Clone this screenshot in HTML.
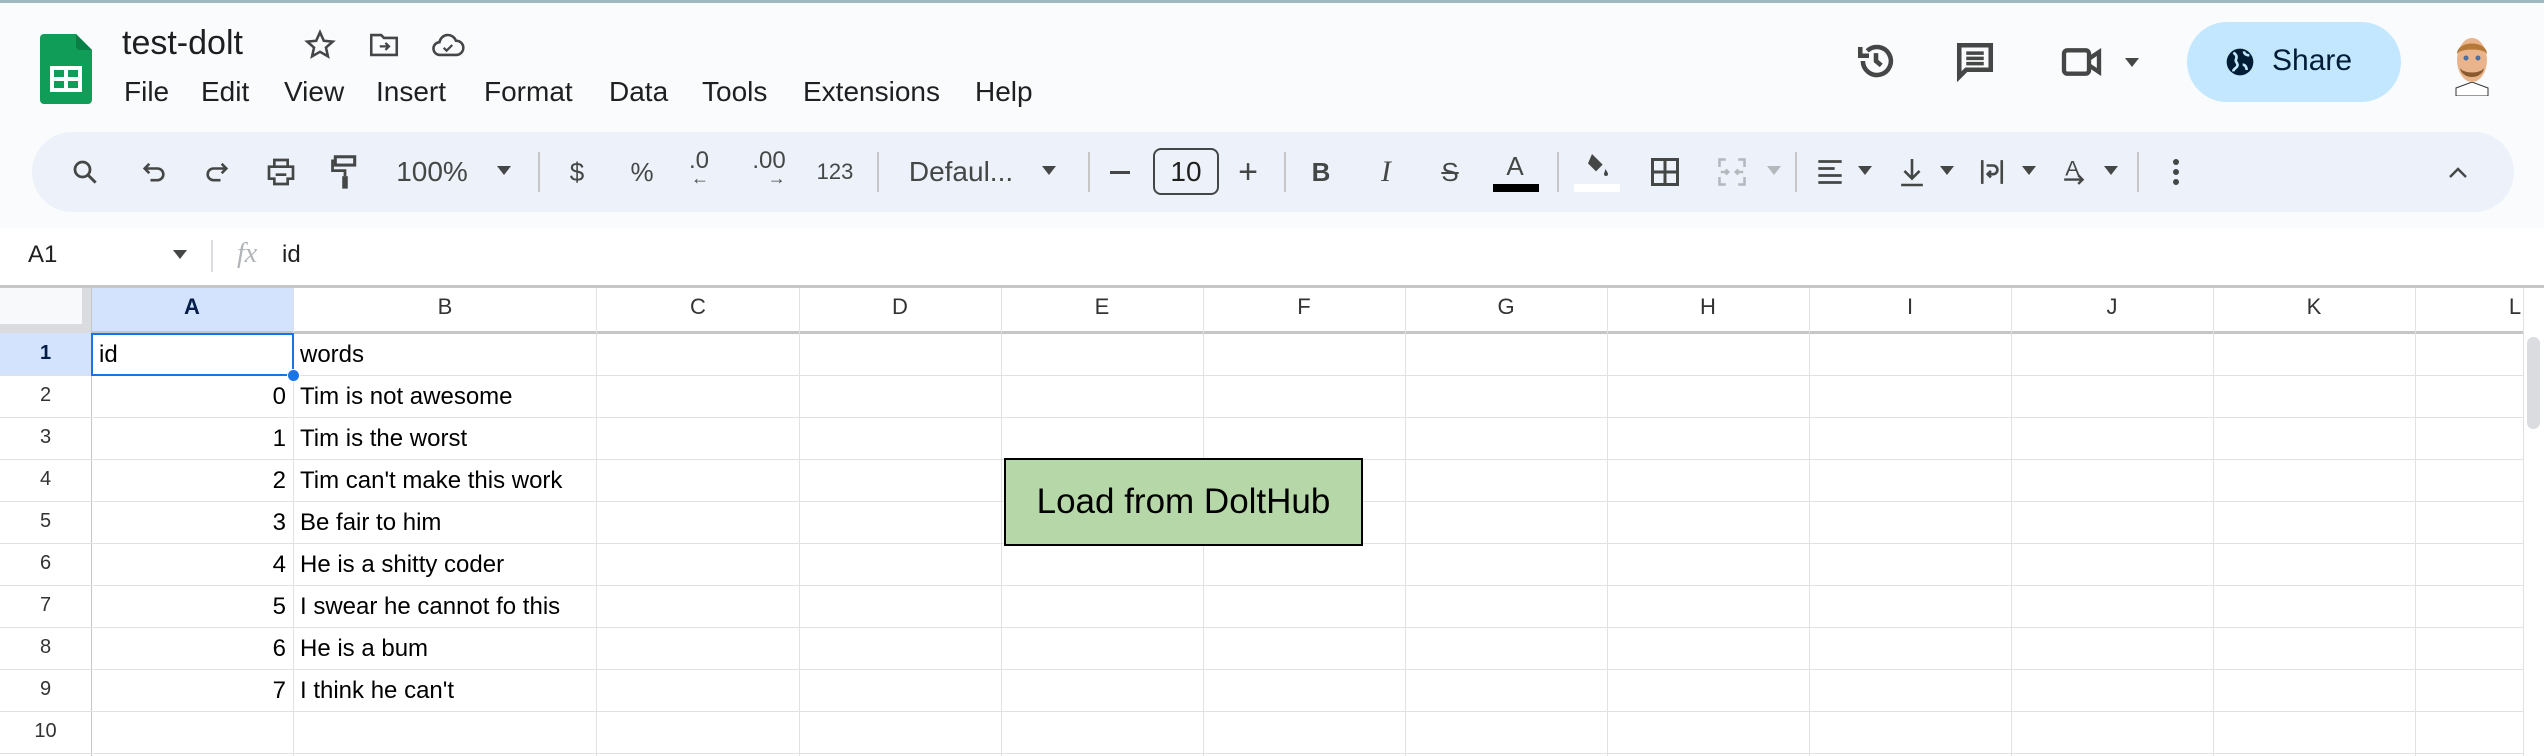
<!DOCTYPE html>
<html><head><meta charset="utf-8"><style>
*{margin:0;padding:0;box-sizing:border-box}
body{width:2544px;height:756px;overflow:hidden;background:#f9fbfd;font-family:"Liberation Sans",Arial,sans-serif;position:relative;color:#1f1f1f}
.a{position:absolute}
.menu span{position:absolute;top:76px;font-size:28px;color:#1f1f1f}
.tb{position:absolute;left:32px;top:132px;width:2482px;height:80px;background:#edf2fa;border-radius:40px}
.ic{position:absolute;top:172px;transform:translate(-50%,-50%);color:#444746;font-size:26px;line-height:1}
.sep{position:absolute;top:152px;width:2px;height:40px;background:#c7c7c7}
.dd{position:absolute;top:166px;width:0;height:0;border-left:7px solid transparent;border-right:7px solid transparent;border-top:9px solid #444746}
.grid{position:absolute;left:0;top:285px;width:2544px;height:471px;background:#fff}
.vl{position:absolute;width:1px;background:#e1e1e1}
.hl{position:absolute;height:1px;background:#e1e1e1}
.ch{position:absolute;top:294px;font-size:22px;color:#333;transform:translateX(-50%)}
.rh{position:absolute;left:0;width:91px;text-align:center;font-size:20px;color:#333}
.c{position:absolute;font-size:24px;color:#000}
</style></head><body>
<div class="a" style="left:0;top:0;width:2544px;height:3px;background:#9fb8be"></div>
<svg class="a" style="left:40px;top:34px" width="54" height="70" viewBox="0 0 54 70"><path d="M4 0h32l16 16v50a4 4 0 0 1-4 4H4a4 4 0 0 1-4-4V4a4 4 0 0 1 4-4z" fill="#0f9d58"/><path d="M36 0l16 16H40a4 4 0 0 1-4-4z" fill="#087f45"/><rect x="10" y="32" width="32" height="26" fill="#fff"/><rect x="14" y="36" width="10" height="7" fill="#0f9d58"/><rect x="28" y="36" width="10" height="7" fill="#0f9d58"/><rect x="14" y="47" width="10" height="7" fill="#0f9d58"/><rect x="28" y="47" width="10" height="7" fill="#0f9d58"/></svg>
<div class="a" style="left:122px;top:24px;font-size:34px;color:#1f1f1f">test-dolt</div>
<svg class="a" style="left:303px;top:28px" width="34" height="34" viewBox="0 0 24 24"><path d="M12 3l2.7 6 6.3.6-4.8 4.2 1.4 6.2L12 16.8 6.4 20l1.4-6.2L3 9.6 9.3 9z" fill="none" stroke="#444746" stroke-width="1.8"/></svg>
<svg class="a" style="left:367px;top:28px" width="34" height="34" viewBox="0 0 24 24"><path d="M3 5h7l2 2h9v12H3z" fill="none" stroke="#444746" stroke-width="1.8"/><path d="M9 13h6M13 10.5l2.5 2.5-2.5 2.5" fill="none" stroke="#444746" stroke-width="1.6"/></svg>
<svg class="a" style="left:430px;top:28px" width="36" height="34" viewBox="0 0 24 24"><path d="M6.5 19a4.5 4.5 0 0 1-.5-9A6 6 0 0 1 17.6 9 5 5 0 0 1 18 19z" fill="none" stroke="#444746" stroke-width="1.8"/><path d="M9 14l2 2 4-4" fill="none" stroke="#444746" stroke-width="1.6"/></svg>
<div class="menu"><span style="left:124px">File</span><span style="left:201px">Edit</span><span style="left:284px">View</span><span style="left:376px">Insert</span><span style="left:484px">Format</span><span style="left:609px">Data</span><span style="left:702px">Tools</span><span style="left:803px">Extensions</span><span style="left:975px">Help</span></div>
<svg class="a" style="left:1855px;top:40px" width="42" height="42" viewBox="0 0 24 24"><path d="M4.5 12A8 8 0 1 0 7 6.2" fill="none" stroke="#444746" stroke-width="2.6"/><path d="M3 4v5h5" fill="none" stroke="#444746" stroke-width="2.6"/><path d="M12 7.5V12l3 2.5" fill="none" stroke="#444746" stroke-width="2.6"/></svg>
<svg class="a" style="left:1954px;top:40px" width="42" height="42" viewBox="0 0 24 24"><path d="M3 3h18v14H7l-4 4z" fill="none" stroke="#444746" stroke-width="2.6"/><path d="M7 7.5h10M7 10.5h10M7 13.5h10" stroke="#444746" stroke-width="2"/></svg>
<svg class="a" style="left:2060px;top:42px" width="48" height="40" viewBox="0 0 28 24"><rect x="2" y="5" width="15" height="14" rx="2" fill="none" stroke="#444746" stroke-width="2.6"/><path d="M17 10l6-4v12l-6-4" fill="none" stroke="#444746" stroke-width="2.6"/></svg>
<div class="dd" style="left:2125px;top:58px"></div>
<div class="a" style="left:2187px;top:22px;width:214px;height:80px;border-radius:40px;background:#c2e7ff"></div>
<svg class="a" style="left:2224px;top:46px" width="32" height="32" viewBox="0 0 24 24"><circle cx="12" cy="12" r="10" fill="#001d35"/><path d="M7 5c2 1 3 3 2 5s2 3 1 5-3 2-3 4M15 4c0 2 2 3 4 3M14 14c2 0 3 2 3 4" fill="none" stroke="#c2e7ff" stroke-width="2"/></svg>
<div class="a" style="left:2272px;top:44px;font-size:30px;color:#001d35">Share</div>
<svg class="a" style="left:2448px;top:30px" width="48" height="66" viewBox="0 0 48 66"><path d="M8 58l16-6 16 6v8H8z" fill="#fff" stroke="#333" stroke-width="1"/><ellipse cx="24" cy="30" rx="15" ry="22" fill="#e9b48c"/><path d="M9 24c0-14 30-14 30 0c-3-6-27-6-30 0z" fill="#b57a3a"/><path d="M12 38c2 12 22 12 24 0c-4 6-20 6-24 0z" fill="#8a5a2f"/><circle cx="18" cy="28" r="2.5" fill="#4a6fa0"/><circle cx="30" cy="28" r="2.5" fill="#4a6fa0"/></svg>
<div class="tb"></div>
<svg class="ic" style="left:85px" width="30" height="32" viewBox="0 0 24 24"><circle cx="10" cy="10" r="6" fill="none" stroke="#444746" stroke-width="2.2"/><path d="M14.5 14.5l6 6" stroke="#444746" stroke-width="2.4"/></svg>
<svg class="ic" style="left:154px" width="28" height="28" viewBox="0 0 24 24"><path d="M5 9h10a5 5 0 0 1 0 10H9" fill="none" stroke="#444746" stroke-width="2.2"/><path d="M8 5L4 9l4 4" fill="none" stroke="#444746" stroke-width="2.2"/></svg>
<svg class="ic" style="left:217px" width="28" height="28" viewBox="0 0 24 24"><path d="M19 9H9a5 5 0 0 0 0 10h6" fill="none" stroke="#444746" stroke-width="2.2"/><path d="M16 5l4 4-4 4" fill="none" stroke="#444746" stroke-width="2.2"/></svg>
<svg class="ic" style="left:281px" width="32" height="32" viewBox="0 0 24 24"><path d="M7 3h10v5H7zM3 8h18v9h-4v4H7v-4H3z" fill="none" stroke="#444746" stroke-width="2"/><path d="M8 14h8" stroke="#444746" stroke-width="2"/></svg>
<svg class="ic" style="left:345px" width="28" height="36" viewBox="0 0 20 26"><rect x="3" y="2" width="14" height="6" fill="none" stroke="#444746" stroke-width="2.2"/><path d="M3 5H1v7h9v4" fill="none" stroke="#444746" stroke-width="2"/><rect x="8" y="16" width="4" height="9" fill="#444746"/></svg>
<div class="ic" style="left:432px;font-size:28px">100%</div>
<div class="dd" style="left:497px"></div>
<div class="sep" style="left:538px"></div>
<div class="ic" style="left:577px">$</div>
<div class="ic" style="left:642px">%</div>
<div class="ic" style="left:699px;font-size:24px;top:168px">.0<div style="font-size:18px;margin-top:-4px;text-align:right">←</div></div>
<div class="ic" style="left:769px;font-size:24px;top:168px">.00<div style="font-size:18px;margin-top:-4px;text-align:right">→</div></div>
<div class="ic" style="left:835px;font-size:22px">123</div>
<div class="sep" style="left:877px"></div>
<div class="ic" style="left:961px;font-size:28px">Defaul...</div>
<div class="dd" style="left:1042px"></div>
<div class="sep" style="left:1088px"></div>
<div class="a" style="left:1110px;top:171px;width:20px;height:2.5px;background:#444746"></div>
<div class="a" style="left:1153px;top:148px;width:66px;height:47px;border:2px solid #444746;border-radius:8px;font-size:28px;text-align:center;line-height:43px;color:#1f1f1f">10</div>
<div class="ic" style="left:1248px;font-size:34px">+</div>
<div class="sep" style="left:1284px"></div>
<div class="ic" style="left:1321px;font-weight:bold">B</div>
<div class="ic" style="left:1386px;font-style:italic;font-family:'Liberation Serif',serif;font-size:30px">I</div>
<div class="ic" style="left:1450px;text-decoration:line-through">S</div>
<div class="ic" style="left:1515px;top:166px;font-size:26px">A</div>
<div class="a" style="left:1493px;top:184px;width:46px;height:8px;background:#000"></div>
<div class="sep" style="left:1557px"></div>
<svg class="ic" style="left:1596px;top:166px" width="32" height="32" viewBox="0 0 24 24"><path d="M9 3l8 8-5 5-6-6z" fill="#444746"/><path d="M19 14c1 2 2 3 2 4a1.5 1.5 0 0 1-3 0c0-1 1-2 1-4z" fill="#444746"/></svg>
<div class="a" style="left:1574px;top:184px;width:46px;height:8px;background:#fff"></div>
<svg class="ic" style="left:1665px" width="30" height="30" viewBox="0 0 24 24"><rect x="2" y="2" width="20" height="20" fill="none" stroke="#444746" stroke-width="2.4"/><path d="M12 2v20M2 12h20" stroke="#444746" stroke-width="2.4"/></svg>
<svg class="ic" style="left:1732px" width="30" height="30" viewBox="0 0 24 24"><path d="M2 8V2h5M17 2h5v6M22 16v6h-5M7 22H2v-6M3 12h6M21 12h-6M7 10l2 2-2 2M17 10l-2 2 2 2" fill="none" stroke="#b4b8bd" stroke-width="2"/></svg>
<div class="dd" style="left:1767px;border-top-color:#b4b8bd"></div>
<div class="sep" style="left:1795px"></div>
<svg class="ic" style="left:1830px" width="28" height="30" viewBox="0 0 24 24"><path d="M2 3h20M2 9h14M2 15h20M2 21h20" stroke="#444746" stroke-width="2.4"/></svg>
<div class="dd" style="left:1858px"></div>
<svg class="ic" style="left:1912px" width="26" height="32" viewBox="0 0 24 28"><path d="M12 2v18M5 13l7 7 7-7M2 26h20" fill="none" stroke="#444746" stroke-width="2.4"/></svg>
<div class="dd" style="left:1940px"></div>
<svg class="ic" style="left:1992px" width="26" height="32" viewBox="0 0 24 28"><path d="M3 3v22M21 3v22M7 8h6a4 4 0 0 1 0 8H9M11 13l-3 3 3 3" fill="none" stroke="#444746" stroke-width="2.4"/></svg>
<div class="dd" style="left:2022px"></div>
<svg class="ic" style="left:2075px" width="26" height="34" viewBox="0 0 24 30"><text x="3" y="18" font-size="20" fill="#444746" font-family="Liberation Sans">A</text><path d="M2 22h16M15 18l4 4-4 4" fill="none" stroke="#444746" stroke-width="2.2"/></svg>
<div class="dd" style="left:2104px"></div>
<div class="sep" style="left:2137px"></div>
<svg class="ic" style="left:2176px" width="8" height="28" viewBox="0 0 8 28"><circle cx="4" cy="4" r="3" fill="#444746"/><circle cx="4" cy="14" r="3" fill="#444746"/><circle cx="4" cy="24" r="3" fill="#444746"/></svg>
<svg class="ic" style="left:2458px" width="22" height="14" viewBox="0 0 22 14"><path d="M3 12l8-8 8 8" fill="none" stroke="#444746" stroke-width="2.4"/></svg>
<div class="a" style="left:0;top:228px;width:2544px;height:57px;background:#fff"></div>
<div class="a" style="left:28px;top:241px;font-size:24px">A1</div>
<div class="dd" style="left:173px;top:250px"></div>
<div class="a" style="left:211px;top:240px;width:2px;height:32px;background:#dadce0"></div>
<div class="a" style="left:237px;top:238px;font-size:28px;font-style:italic;font-family:'Liberation Serif',serif;color:#b0b3b8">fx</div>
<div class="a" style="left:282px;top:241px;font-size:24px">id</div>
<div class="grid"></div>
<div class="a" style="left:0;top:285px;width:2544px;height:3px;background:#c4c7c5"></div>
<div class="a" style="left:0;top:288px;width:82px;height:36px;background:#f8f9fa"></div>
<div class="a" style="left:0;top:324px;width:91px;height:9px;background:#dadce0"></div>
<div class="a" style="left:82px;top:288px;width:9px;height:45px;background:#dadce0"></div>
<div class="a" style="left:91px;top:288px;width:202px;height:45px;background:#d3e3fd"></div>
<div class="a" style="left:0;top:333px;width:91px;height:42px;background:#d3e3fd"></div>
<div class="a" style="left:91px;top:331px;width:2432px;height:3px;background:#c4c7c5"></div>
<div class="vl" style="left:91px;top:288px;height:468px;background:#c4c7c5"></div>
<div class="vl" style="left:293px;top:288px;height:468px"></div>
<div class="vl" style="left:596px;top:288px;height:468px"></div>
<div class="vl" style="left:799px;top:288px;height:468px"></div>
<div class="vl" style="left:1001px;top:288px;height:468px"></div>
<div class="vl" style="left:1203px;top:288px;height:468px"></div>
<div class="vl" style="left:1405px;top:288px;height:468px"></div>
<div class="vl" style="left:1607px;top:288px;height:468px"></div>
<div class="vl" style="left:1809px;top:288px;height:468px"></div>
<div class="vl" style="left:2011px;top:288px;height:468px"></div>
<div class="vl" style="left:2213px;top:288px;height:468px"></div>
<div class="vl" style="left:2415px;top:288px;height:468px"></div>
<div class="hl" style="left:0;top:375px;width:2523px"></div>
<div class="hl" style="left:0;top:417px;width:2523px"></div>
<div class="hl" style="left:0;top:459px;width:2523px"></div>
<div class="hl" style="left:0;top:501px;width:2523px"></div>
<div class="hl" style="left:0;top:543px;width:2523px"></div>
<div class="hl" style="left:0;top:585px;width:2523px"></div>
<div class="hl" style="left:0;top:627px;width:2523px"></div>
<div class="hl" style="left:0;top:669px;width:2523px"></div>
<div class="hl" style="left:0;top:711px;width:2523px"></div>
<div class="hl" style="left:0;top:753px;width:2523px"></div>
<div class="ch" style="left:192px;color:#041e49;font-weight:bold">A</div>
<div class="ch" style="left:445px">B</div>
<div class="ch" style="left:698px">C</div>
<div class="ch" style="left:900px">D</div>
<div class="ch" style="left:1102px">E</div>
<div class="ch" style="left:1304px">F</div>
<div class="ch" style="left:1506px">G</div>
<div class="ch" style="left:1708px">H</div>
<div class="ch" style="left:1910px">I</div>
<div class="ch" style="left:2112px">J</div>
<div class="ch" style="left:2314px">K</div>
<div class="ch" style="left:2515px">L</div>
<div class="a" style="left:2523px;top:288px;width:21px;height:468px;background:#fff;border-left:1px solid #e1e1e1"></div>
<div class="a" style="left:2527px;top:337px;width:13px;height:92px;background:#dadce0;border-radius:7px"></div>
<div class="rh" style="top:342px;color:#041e49;font-weight:bold">1</div>
<div class="rh" style="top:384px">2</div>
<div class="rh" style="top:426px">3</div>
<div class="rh" style="top:468px">4</div>
<div class="rh" style="top:510px">5</div>
<div class="rh" style="top:552px">6</div>
<div class="rh" style="top:594px">7</div>
<div class="rh" style="top:636px">8</div>
<div class="rh" style="top:678px">9</div>
<div class="rh" style="top:720px">10</div>
<div class="c" style="left:99px;top:341px">id</div>
<div class="c" style="left:300px;top:341px">words</div>
<div class="c" style="left:200px;top:383px;width:86px;text-align:right">0</div>
<div class="c" style="left:200px;top:425px;width:86px;text-align:right">1</div>
<div class="c" style="left:200px;top:467px;width:86px;text-align:right">2</div>
<div class="c" style="left:200px;top:509px;width:86px;text-align:right">3</div>
<div class="c" style="left:200px;top:551px;width:86px;text-align:right">4</div>
<div class="c" style="left:200px;top:593px;width:86px;text-align:right">5</div>
<div class="c" style="left:200px;top:635px;width:86px;text-align:right">6</div>
<div class="c" style="left:200px;top:677px;width:86px;text-align:right">7</div>
<div class="c" style="left:300px;top:383px">Tim is not awesome</div>
<div class="c" style="left:300px;top:425px">Tim is the worst</div>
<div class="c" style="left:300px;top:467px">Tim can't make this work</div>
<div class="c" style="left:300px;top:509px">Be fair to him</div>
<div class="c" style="left:300px;top:551px">He is a shitty coder</div>
<div class="c" style="left:300px;top:593px">I swear he cannot fo this</div>
<div class="c" style="left:300px;top:635px">He is a bum</div>
<div class="c" style="left:300px;top:677px">I think he can't</div>
<div class="a" style="left:91px;top:333px;width:203px;height:43px;border:2px solid #1a73e8"></div>
<div class="a" style="left:287px;top:369px;width:13px;height:13px;border-radius:50%;background:#1a73e8;border:1px solid #fff"></div>
<div class="a" style="left:1004px;top:458px;width:359px;height:88px;background:#b6d7a8;border:2px solid #000;font-size:35px;text-align:center;line-height:84px;color:#000">Load from DoltHub</div>
</body></html>
